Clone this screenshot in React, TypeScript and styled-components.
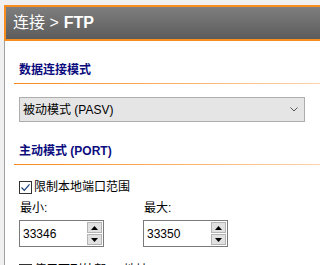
import { createGlobalStyle } from "styled-components";
import styled from "styled-components";

const GlobalStyle = createGlobalStyle`
  html, body {
    margin: 0;
    padding: 0;
    background: #f0f0f0;
    overflow: hidden;
  }
  body {
    font-family: "Liberation Sans", "Noto Sans CJK SC", sans-serif;
    font-size: 12px;
    color: #000;
  }
`;

const Frame = styled.div`
  padding: 5px 0 0 4px;
  height: 100vh;
  box-sizing: border-box;
`;

const Panel = styled.div`
  display: flex;
  flex-direction: column;
  height: 100%;
`;

const Header = styled.div`
  flex-shrink: 0;
  height: 36px;
  box-sizing: border-box;
  border: 2px solid #f98d1f;
  border-right: none;
  background: linear-gradient(to bottom, #7e7e7e, #5c5c5c);
  color: #fff;
  display: flex;
  align-items: center;
  padding-left: 7px;
  font-size: 16px;
  line-height: 20px;

  b {
    font-weight: bold;
    margin-left: 5px;
  }
`;

const Content = styled.div`
  flex: 1 0 auto;
  background: #fff;
  border-left: 1px solid #a0a0a0;
  padding: 21px 0 0 9px;
`;

const SectionTitle = styled.div<{ $gap?: number }>`
  margin-top: ${({ $gap }) => $gap ?? 0}px;
  padding: 0 0 5px 5px;
  color: #0c0c7e;
  font-weight: bold;
  font-size: 12px;
  line-height: 16px;
  border-bottom: 1px solid transparent;
  border-image: linear-gradient(to right, #f88a1a, #fcd3ad) 1;
`;

const Group = styled.div<{ $gap?: number }>`
  margin-top: ${({ $gap }) => $gap ?? 0}px;
  padding: 0 15px 0 5px;
`;

const Select = styled.div`
  height: 25px;
  box-sizing: border-box;
  background: #e5e5e5;
  border: 1px solid #adadad;
  display: flex;
  align-items: center;
  justify-content: space-between;
  padding: 0 6px 0 3px;
  line-height: 16px;

  svg {
    width: 8px;
    height: 5px;
  }
`;

const CheckRow = styled.label`
  display: flex;
  align-items: center;
  gap: 2px;
  line-height: 16px;
`;

const Box = styled.span`
  width: 13px;
  height: 13px;
  box-sizing: border-box;
  border: 1px solid #333;
  background: #fff;
  display: flex;
  align-items: center;
  justify-content: center;

  svg {
    width: 11px;
    height: 11px;
  }
`;

const RangeGrid = styled.div`
  display: grid;
  grid-template-columns: 85px 85px;
  column-gap: 39px;
  row-gap: 4px;
  margin-top: 5px;
`;

const FieldLabel = styled.div`
  line-height: 16px;
  padding-left: 1px;
`;

const SpinBox = styled.div`
  height: 27px;
  box-sizing: border-box;
  border: 1px solid #7a7a7a;
  background: #fff;
  display: flex;
  align-items: center;
  justify-content: space-between;
  padding: 1px 1px 1px 3px;
  font-size: 12px;
`;

const SpinButtons = styled.div`
  display: flex;
  flex-direction: column;
  gap: 1px;
  width: 15px;
  height: 100%;
`;

const SpinButton = styled.div`
  flex: 1;
  background: #e1e1e1;
  border: 1px solid #b4b4b4;
  display: flex;
  align-items: center;
  justify-content: center;

  svg {
    width: 7px;
    height: 4px;
  }
`;

const Chevron = () => (
  <svg viewBox="0 0 8 5">
    <path d="M0.5 0.5 L4 4 L7.5 0.5" fill="none" stroke="#555" strokeWidth="1" />
  </svg>
);

const Tick = () => (
  <svg viewBox="0 0 11 11">
    <path d="M1.5 5.5 L4.3 8.3 L9.5 2.3" fill="none" stroke="#1c3f78" strokeWidth="1.2" />
  </svg>
);

const Arrow = ({ up }: { up?: boolean }) => (
  <svg viewBox="0 0 7 4">
    <path d={up ? "M0 4 L3.5 0 L7 4 Z" : "M0 0 L3.5 4 L7 0 Z"} fill="#000" />
  </svg>
);

const Spin = ({ value }: { value: string }) => (
  <SpinBox>
    <span>{value}</span>
    <SpinButtons>
      <SpinButton>
        <Arrow up />
      </SpinButton>
      <SpinButton>
        <Arrow />
      </SpinButton>
    </SpinButtons>
  </SpinBox>
);

const Checkbox = ({ checked, children }: { checked?: boolean; children: React.ReactNode }) => (
  <CheckRow>
    <Box>{checked && <Tick />}</Box>
    <span>{children}</span>
  </CheckRow>
);

export default function App() {
  return (
    <>
      <GlobalStyle />
      <Frame>
        <Panel>
          <Header>
            连接 &gt;<b>FTP</b>
          </Header>
          <Content>
            <SectionTitle>数据连接模式</SectionTitle>
            <Group $gap={13}>
              <Select>
                <span>被动模式 (PASV)</span>
                <Chevron />
              </Select>
            </Group>
            <SectionTitle $gap={21}>主动模式 (PORT)</SectionTitle>
            <Group $gap={14}>
              <Checkbox checked>限制本地端口范围</Checkbox>
              <RangeGrid>
                <FieldLabel>最小:</FieldLabel>
                <FieldLabel>最大:</FieldLabel>
                <Spin value="33346" />
                <Spin value="33350" />
              </RangeGrid>
            </Group>
            <Group $gap={15}>
              <Checkbox>使用下列外部 IP 地址:</Checkbox>
            </Group>
          </Content>
        </Panel>
      </Frame>
    </>
  );
}
